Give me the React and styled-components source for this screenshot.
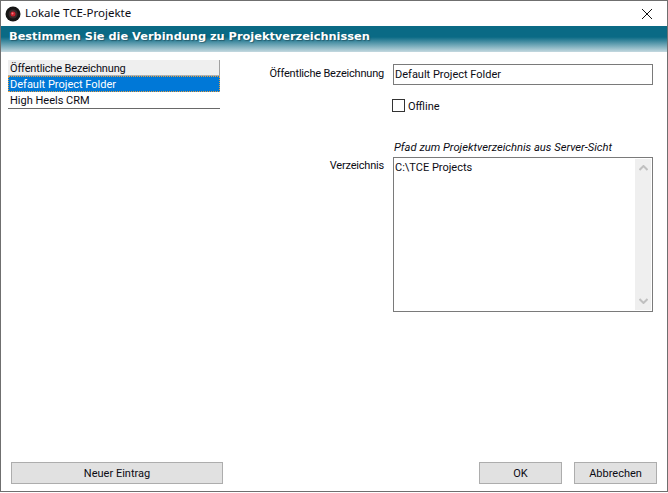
import React from "react";
import styled, { createGlobalStyle } from "styled-components";

const GlobalStyle = createGlobalStyle`
  html, body {
    margin: 0;
    padding: 0;
    background: #fff;
  }
  * {
    box-sizing: border-box;
  }
`;

const App = () => {
  return (
    <>
      <GlobalStyle />
      <Window>
        <TitleBar>
          <AppIcon viewBox="0 0 16 16">
            <circle cx="8" cy="8" r="7.5" fill="#151515" />
            <circle cx="8" cy="8" r="4.5" fill="#3a2a2c" />
            <circle cx="8" cy="8" r="2.5" fill="#c8202c" />
            <circle cx="7.5" cy="7.5" r="1" fill="#f08088" />
          </AppIcon>
          <Title>Lokale TCE-Projekte</Title>
          <CloseIcon viewBox="0 0 10 10">
            <path d="M0 0 L10 10 M10 0 L0 10" stroke="#111" strokeWidth="1" fill="none" />
          </CloseIcon>
        </TitleBar>
        <Banner>Bestimmen Sie die Verbindung zu Projektverzeichnissen</Banner>
        <Content>
          <List>
            <ListHead>Öffentliche Bezeichnung</ListHead>
            <ListItem $selected>Default Project Folder</ListItem>
            <ListItem>High Heels CRM</ListItem>
          </List>
          <Form>
            <Label>Öffentliche Bezeichnung</Label>
            <TextInput>Default Project Folder</TextInput>
            <CheckRow>
              <CheckBox />
              <OfflineText>Offline</OfflineText>
            </CheckRow>
            <Hint>Pfad zum Projektverzeichnis aus Server-Sicht</Hint>
            <DirLabel>Verzeichnis</DirLabel>
            <TextArea>
              <span>C:\TCE Projects</span>
              <ScrollBar>
                <Arrow viewBox="0 0 9 6">
                  <path d="M0.5 5 L4.5 1 L8.5 5" stroke="#c0c0c0" strokeWidth="2" fill="none" />
                </Arrow>
                <Arrow viewBox="0 0 9 6">
                  <path d="M0.5 1 L4.5 5 L8.5 1" stroke="#c0c0c0" strokeWidth="2" fill="none" />
                </Arrow>
              </ScrollBar>
            </TextArea>
          </Form>
        </Content>
        <Footer>
          <Button $width="212px">Neuer Eintrag</Button>
          <FooterRight>
            <Button $width="83px">OK</Button>
            <Button $width="83px">Abbrechen</Button>
          </FooterRight>
        </Footer>
      </Window>
    </>
  );
};

export default App;

const Window = styled.div`
  display: flex;
  flex-direction: column;
  width: 668px;
  height: 492px;
  background: #fff;
  border: 1px solid #6f6f6f;
  font-family: Roboto, "Open Sans", sans-serif;
  font-size: 11px;
  color: #0c0c14;
`;

const TitleBar = styled.div`
  display: flex;
  align-items: center;
  height: 25px;
  padding: 0 15px 0 4px;
  flex-shrink: 0;
`;

const AppIcon = styled.svg`
  width: 16px;
  height: 16px;
  margin-right: 4px;
`;

const Title = styled.div`
  flex: 1;
  margin-top: -2px;
  font-family: "Noto Sans", sans-serif;
  font-size: 11.5px;
`;

const CloseIcon = styled.svg`
  width: 10px;
  height: 10px;
`;

const Banner = styled.div`
  height: 26px;
  flex-shrink: 0;
  padding: 3px 0 0 8px;
  background: linear-gradient(#0a6a85 0, #0a6a85 11px, #c4d9e0 26px);
  color: #fff;
  font-family: "DejaVu Sans", sans-serif;
  font-weight: bold;
  font-size: 11.35px;
  text-shadow: 1px 1px 1px rgba(0, 0, 0, 0.3);
`;

const Content = styled.div`
  display: flex;
  flex: 1;
  padding: 8px 14px 0 7px;
`;

const List = styled.div`
  width: 212px;
  height: 49px;
  flex-shrink: 0;
  border-bottom: 1px solid #696969;
`;

const ListHead = styled.div`
  height: 16px;
  padding-left: 2px;
  line-height: 18px;
  letter-spacing: -0.15px;
  background: #efefef;
  border-right: 1px solid #a0a0a0;
  border-bottom: 1px solid #b0b0b0;
`;

const ListItem = styled.div`
  height: 16px;
  padding-left: 2px;
  line-height: 18px;
  background: ${(props) => (props.$selected ? "#0078d7" : "#fff")};
  color: ${(props) => (props.$selected ? "#fff" : "#0c0c14")};
  outline: ${(props) => (props.$selected ? "1px dotted #e8a040" : "none")};
  outline-offset: -1px;
`;

const Form = styled.div`
  display: grid;
  flex: 1;
  grid-template-columns: 155px 260px;
  grid-template-rows: 21px 14px 13px 35px 10px 155px;
  column-gap: 9px;
  margin-top: 4px;
  align-content: start;
  justify-content: end;
`;

const Label = styled.div`
  text-align: right;
  line-height: 19px;
  letter-spacing: -0.2px;
`;

const TextInput = styled.div`
  border: 1px solid #7a7a7a;
  padding-left: 1px;
  line-height: 19px;
`;

const CheckRow = styled.div`
  grid-column: 2;
  grid-row: 3;
  display: flex;
  align-items: center;
  gap: 3px;
  margin-left: -1px;
  line-height: 13px;
`;

const CheckBox = styled.div`
  width: 13px;
  height: 13px;
  border: 1px solid #333;
  background: #fff;
`;

const OfflineText = styled.span`
  padding-top: 1px;
`;

const Hint = styled.div`
  grid-column: 2;
  grid-row: 4;
  align-self: end;
  padding-left: 1px;
  font-style: italic;
  font-size: 11.2px;
  line-height: 13px;
  margin-bottom: -7px;
`;

const DirLabel = styled(Label)`
  grid-column: 1;
  grid-row: 6;
  line-height: 17px;
`;

const TextArea = styled.div`
  grid-column: 2;
  grid-row: 6;
  display: flex;
  justify-content: space-between;
  border: 1px solid #7a7a7a;
  padding: 1px 1px 1px 1px;
  line-height: 17px;
`;

const ScrollBar = styled.div`
  display: flex;
  flex-direction: column;
  justify-content: space-between;
  align-items: center;
  width: 16px;
  padding: 6px 0;
  background: #efefef;
`;

const Arrow = styled.svg`
  width: 9px;
  height: 6px;
`;

const Footer = styled.div`
  display: flex;
  justify-content: space-between;
  padding: 0 10px 7px 10px;
`;

const FooterRight = styled.div`
  display: flex;
  gap: 12px;
`;

const Button = styled.button`
  width: ${(props) => props.$width};
  height: 22px;
  padding: 0;
  background: #e1e1e1;
  border: 1px solid #adadad;
  font: inherit;
  color: #0c0c14;
`;
